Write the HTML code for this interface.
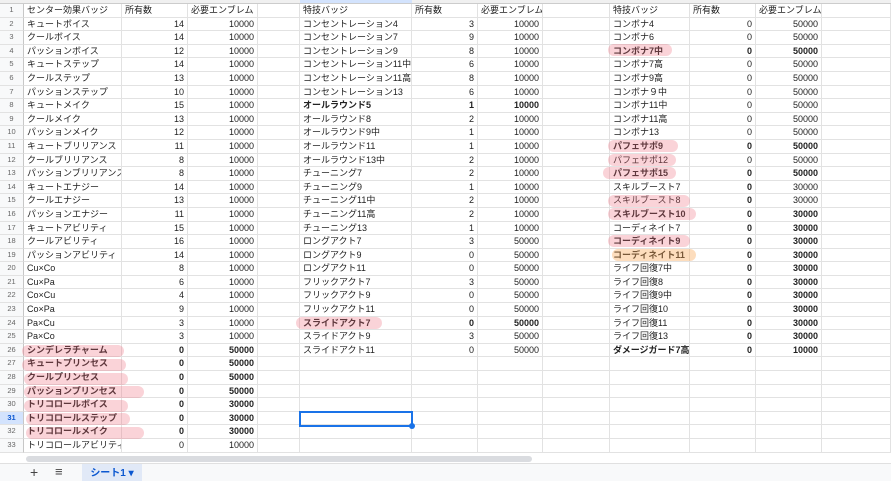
<!DOCTYPE html><html><head><meta charset="utf-8"><style>
body{margin:0;width:891px;height:480px;overflow:hidden;background:#fff;font-family:"Liberation Sans","Noto Sans CJK JP",sans-serif;position:relative}
#top{position:absolute;left:0;top:0;width:891px;height:3px;background:#f0f0f0;border-bottom:1px solid #ccc}
#top b{position:absolute;left:300px;top:0;width:112px;height:3px;background:#d3e3fd}
#g{position:absolute;left:0;top:4px;display:grid;grid-template-columns:24px 98px 66px 70px 42px 112px 66px 65px 67px 80px 66px 66px 69px;grid-template-rows:repeat(33,13.6px)}
#g>*{box-sizing:border-box;border-right:1px solid #e2e2e2;border-bottom:1px solid #e2e2e2;font-size:9px;line-height:12.6px;color:#222;white-space:nowrap;overflow:hidden;padding:0 3px;font-style:normal}
#g>u{text-decoration:none;background:#f8f9fa;color:#666;font-size:7.5px;text-align:center;border-right:1px solid #c7c7c7}
#g>.r{text-align:right}
#g>.b{font-weight:bold}
.h{position:absolute;height:12px;border-radius:7px;background:rgba(240,110,125,.3)}
#sel{position:absolute;left:300px;top:412px;width:110px;height:12px;border:2px solid #1a73e8;box-sizing:content-box;margin:-1px}
#dot{position:absolute;left:409px;top:423px;width:6px;height:6px;border-radius:3px;background:#1a73e8}
#sb{position:absolute;left:0;top:455px;width:891px;height:8px;background:#fff}
#th{position:absolute;left:26px;top:456px;width:506px;height:6px;border-radius:3px;background:#dadce0}
#ft{position:absolute;left:0;top:463px;width:891px;height:17px;background:#f8f9fa;border-top:1px solid #e0e0e0}
</style></head><body>
<div id="top"><b></b></div>
<div id="g">
<u>1</u><i>センター効果バッジ</i><i>所有数</i><i>必要エンブレム</i><i></i><i>特技バッジ</i><i>所有数</i><i>必要エンブレム</i><i></i><i>特技バッジ</i><i>所有数</i><i>必要エンブレム</i><i></i>
<u>2</u><i>キュートボイス</i><i class="r">14</i><i class="r">10000</i><i></i><i>コンセントレーション4</i><i class="r">3</i><i class="r">10000</i><i></i><i>コンボナ4</i><i class="r">0</i><i class="r">50000</i><i></i>
<u>3</u><i>クールボイス</i><i class="r">14</i><i class="r">10000</i><i></i><i>コンセントレーション7</i><i class="r">9</i><i class="r">10000</i><i></i><i>コンボナ6</i><i class="r">0</i><i class="r">50000</i><i></i>
<u>4</u><i>パッションボイス</i><i class="r">12</i><i class="r">10000</i><i></i><i>コンセントレーション9</i><i class="r">8</i><i class="r">10000</i><i></i><i class="b">コンボナ7中</i><i class="r b">0</i><i class="r b">50000</i><i></i>
<u>5</u><i>キュートステップ</i><i class="r">14</i><i class="r">10000</i><i></i><i>コンセントレーション11中</i><i class="r">6</i><i class="r">10000</i><i></i><i>コンボナ7高</i><i class="r">0</i><i class="r">50000</i><i></i>
<u>6</u><i>クールステップ</i><i class="r">13</i><i class="r">10000</i><i></i><i>コンセントレーション11高</i><i class="r">8</i><i class="r">10000</i><i></i><i>コンボナ9高</i><i class="r">0</i><i class="r">50000</i><i></i>
<u>7</u><i>パッションステップ</i><i class="r">10</i><i class="r">10000</i><i></i><i>コンセントレーション13</i><i class="r">6</i><i class="r">10000</i><i></i><i>コンボナ９中</i><i class="r">0</i><i class="r">50000</i><i></i>
<u>8</u><i>キュートメイク</i><i class="r">15</i><i class="r">10000</i><i></i><i class="b">オールラウンド5</i><i class="r b">1</i><i class="r b">10000</i><i></i><i>コンボナ11中</i><i class="r">0</i><i class="r">50000</i><i></i>
<u>9</u><i>クールメイク</i><i class="r">13</i><i class="r">10000</i><i></i><i>オールラウンド8</i><i class="r">2</i><i class="r">10000</i><i></i><i>コンボナ11高</i><i class="r">0</i><i class="r">50000</i><i></i>
<u>10</u><i>パッションメイク</i><i class="r">12</i><i class="r">10000</i><i></i><i>オールラウンド9中</i><i class="r">1</i><i class="r">10000</i><i></i><i>コンボナ13</i><i class="r">0</i><i class="r">50000</i><i></i>
<u>11</u><i>キュートブリリアンス</i><i class="r">11</i><i class="r">10000</i><i></i><i>オールラウンド11</i><i class="r">1</i><i class="r">10000</i><i></i><i class="b">パフェサポ9</i><i class="r b">0</i><i class="r b">50000</i><i></i>
<u>12</u><i>クールブリリアンス</i><i class="r">8</i><i class="r">10000</i><i></i><i>オールラウンド13中</i><i class="r">2</i><i class="r">10000</i><i></i><i>パフェサポ12</i><i class="r">0</i><i class="r">50000</i><i></i>
<u>13</u><i>パッションブリリアンス</i><i class="r">8</i><i class="r">10000</i><i></i><i>チューニング7</i><i class="r">2</i><i class="r">10000</i><i></i><i class="b">パフェサポ15</i><i class="r b">0</i><i class="r b">50000</i><i></i>
<u>14</u><i>キュートエナジー</i><i class="r">14</i><i class="r">10000</i><i></i><i>チューニング9</i><i class="r">1</i><i class="r">10000</i><i></i><i>スキルブースト7</i><i class="r b">0</i><i class="r">30000</i><i></i>
<u>15</u><i>クールエナジー</i><i class="r">13</i><i class="r">10000</i><i></i><i>チューニング11中</i><i class="r">2</i><i class="r">10000</i><i></i><i>スキルブースト8</i><i class="r b">0</i><i class="r">30000</i><i></i>
<u>16</u><i>パッションエナジー</i><i class="r">11</i><i class="r">10000</i><i></i><i>チューニング11高</i><i class="r">2</i><i class="r">10000</i><i></i><i class="b">スキルブースト10</i><i class="r b">0</i><i class="r b">30000</i><i></i>
<u>17</u><i>キュートアビリティ</i><i class="r">15</i><i class="r">10000</i><i></i><i>チューニング13</i><i class="r">1</i><i class="r">10000</i><i></i><i>コーディネイト7</i><i class="r b">0</i><i class="r b">30000</i><i></i>
<u>18</u><i>クールアビリティ</i><i class="r">16</i><i class="r">10000</i><i></i><i>ロングアクト7</i><i class="r">3</i><i class="r">50000</i><i></i><i class="b">コーディネイト9</i><i class="r b">0</i><i class="r b">30000</i><i></i>
<u>19</u><i>パッションアビリティ</i><i class="r">14</i><i class="r">10000</i><i></i><i>ロングアクト9</i><i class="r">0</i><i class="r">50000</i><i></i><i class="b">コーディネイト11</i><i class="r b">0</i><i class="r b">30000</i><i></i>
<u>20</u><i>Cu×Co</i><i class="r">8</i><i class="r">10000</i><i></i><i>ロングアクト11</i><i class="r">0</i><i class="r">50000</i><i></i><i>ライフ回復7中</i><i class="r b">0</i><i class="r b">30000</i><i></i>
<u>21</u><i>Cu×Pa</i><i class="r">6</i><i class="r">10000</i><i></i><i>フリックアクト7</i><i class="r">3</i><i class="r">50000</i><i></i><i>ライフ回復8</i><i class="r b">0</i><i class="r b">30000</i><i></i>
<u>22</u><i>Co×Cu</i><i class="r">4</i><i class="r">10000</i><i></i><i>フリックアクト9</i><i class="r">0</i><i class="r">50000</i><i></i><i>ライフ回復9中</i><i class="r b">0</i><i class="r b">30000</i><i></i>
<u>23</u><i>Co×Pa</i><i class="r">9</i><i class="r">10000</i><i></i><i>フリックアクト11</i><i class="r">0</i><i class="r">50000</i><i></i><i>ライフ回復10</i><i class="r b">0</i><i class="r b">30000</i><i></i>
<u>24</u><i>Pa×Cu</i><i class="r">3</i><i class="r">10000</i><i></i><i class="b">スライドアクト7</i><i class="r b">0</i><i class="r b">50000</i><i></i><i>ライフ回復11</i><i class="r b">0</i><i class="r b">30000</i><i></i>
<u>25</u><i>Pa×Co</i><i class="r">3</i><i class="r">10000</i><i></i><i>スライドアクト9</i><i class="r">3</i><i class="r">50000</i><i></i><i>ライフ回復13</i><i class="r b">0</i><i class="r b">30000</i><i></i>
<u>26</u><i class="b">シンデレラチャーム</i><i class="r b">0</i><i class="r b">50000</i><i></i><i>スライドアクト11</i><i class="r">0</i><i class="r">50000</i><i></i><i class="b">ダメージガード7高</i><i class="r b">0</i><i class="r b">10000</i><i></i>
<u>27</u><i class="b">キュートプリンセス</i><i class="r b">0</i><i class="r b">50000</i><i></i><i></i><i></i><i></i><i></i><i></i><i></i><i></i><i></i>
<u>28</u><i class="b">クールプリンセス</i><i class="r b">0</i><i class="r b">50000</i><i></i><i></i><i></i><i></i><i></i><i></i><i></i><i></i><i></i>
<u>29</u><i class="b">パッションプリンセス</i><i class="r b">0</i><i class="r b">50000</i><i></i><i></i><i></i><i></i><i></i><i></i><i></i><i></i><i></i>
<u>30</u><i class="b">トリコロールボイス</i><i class="r b">0</i><i class="r b">30000</i><i></i><i></i><i></i><i></i><i></i><i></i><i></i><i></i><i></i>
<u style="background:#d3e3fd;color:#0b57d0;font-weight:bold">31</u><i class="b">トリコロールステップ</i><i class="r b">0</i><i class="r b">30000</i><i></i><i></i><i></i><i></i><i></i><i></i><i></i><i></i><i></i>
<u>32</u><i class="b">トリコロールメイク</i><i class="r b">0</i><i class="r b">30000</i><i></i><i></i><i></i><i></i><i></i><i></i><i></i><i></i><i></i>
<u>33</u><i>トリコロールアビリティ</i><i class="r">0</i><i class="r">10000</i><i></i><i></i><i></i><i></i><i></i><i></i><i></i><i></i><i></i>
</div>
<div class="h" style="left:22px;top:345px;width:102px"></div>
<div class="h" style="left:22px;top:359px;width:104px"></div>
<div class="h" style="left:24px;top:373px;width:104px"></div>
<div class="h" style="left:24px;top:386px;width:120px"></div>
<div class="h" style="left:24px;top:400px;width:104px"></div>
<div class="h" style="left:26px;top:413px;width:104px"></div>
<div class="h" style="left:26px;top:427px;width:118px"></div>
<div class="h" style="left:296px;top:317px;width:86px"></div>
<div class="h" style="left:608px;top:44px;width:64px"></div>
<div class="h" style="left:608px;top:140px;width:70px"></div>
<div class="h" style="left:608px;top:154px;width:68px"></div>
<div class="h" style="left:603px;top:167px;width:73px"></div>
<div class="h" style="left:608px;top:195px;width:82px"></div>
<div class="h" style="left:608px;top:208px;width:88px"></div>
<div class="h" style="left:608px;top:235px;width:82px"></div>
<div class="h" style="left:612px;top:249px;width:84px;background:rgba(250,170,90,.4)"></div>
<div id="sel"></div><div id="dot"></div>
<div id="sb"></div><div id="th"></div>
<div id="ft">
<span style="position:absolute;left:30px;top:0;font-size:14px;color:#444">+</span>
<span style="position:absolute;left:55px;top:0;font-size:13px;color:#444">≡</span>
<span style="position:absolute;left:82px;top:0;width:60px;height:17px;background:#e1e9f7;color:#0b57d0;font-size:10px;font-weight:bold;line-height:19px;text-align:center">シート1 ▾</span>
</div>
</body></html>
